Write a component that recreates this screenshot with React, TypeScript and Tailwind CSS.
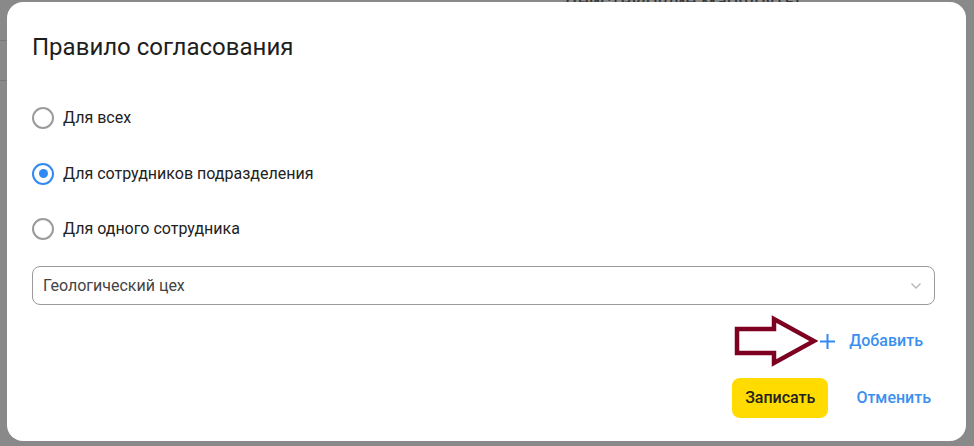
import { useState } from 'react';

const options = [
  { id: 'all', label: 'Для всех' },
  { id: 'dept', label: 'Для сотрудников подразделения' },
  { id: 'one', label: 'Для одного сотрудника' },
];

function Radio({ checked }: { checked: boolean }) {
  return (
    <span
      className={`h-[22px] w-[22px] rounded-full border-2 flex items-center justify-center shrink-0 ${
        checked ? 'border-[#2f8bf3]' : 'border-[#9b9b9b]'
      }`}
    >
      {checked && <span className="h-[9px] w-[9px] rounded-full bg-[#2f8bf3]" />}
    </span>
  );
}

function HintArrow() {
  return (
    <svg width="84" height="52" viewBox="0 0 84 52" className="shrink-0">
      <polygon
        points="3,14 40,14 40,4 80,26 40,48 40,38 3,38"
        fill="none"
        stroke="#7d0021"
        strokeWidth="4.5"
        strokeLinejoin="miter"
      />
    </svg>
  );
}

export default function App() {
  const [value, setValue] = useState('dept');

  return (
    <div className="relative w-[974px] h-[446px] bg-[#898989] overflow-hidden font-['Roboto',sans-serif]">
      {/* page behind the dialog */}
      <div className="absolute left-0 top-[40px] w-[10px] h-px bg-[#777]" />
      <div className="absolute left-0 top-[80px] w-[10px] h-px bg-[#777]" />
      <div className="absolute left-[563px] top-[-14px] text-[20px] text-[#333]">Действующие маршруты</div>

      {/* dialog */}
      <div className="absolute left-[7px] top-[2px] w-[959px] h-[439px] bg-white rounded-[16px] px-[25px] pt-[30px]">
        <h2 className="text-[24px] leading-[30px] text-[#1e1e1e] font-normal">Правило согласования</h2>

        <div className="flex flex-col gap-[33.5px] mt-[45px]">
          {options.map((o) => (
            <label
              key={o.id}
              className="flex items-center gap-[9px] h-[22px] cursor-pointer"
              onClick={() => setValue(o.id)}
            >
              <Radio checked={value === o.id} />
              <span className="text-[16px] text-[#222]">{o.label}</span>
            </label>
          ))}
        </div>

        <div className="mt-[26px] h-[39px] w-[903px] border border-[#9a9a9a] rounded-[8px] flex items-center justify-between pl-[10px] pr-[12px]">
          <span className="text-[16px] text-[#444]">Геологический цех</span>
          <svg width="12" height="8" viewBox="0 0 12 8" fill="none" stroke="#b5b5b5" strokeWidth="1.3">
            <polyline points="1.5,1.5 6,6 10.5,1.5" />
          </svg>
        </div>

        <div className="flex items-center justify-end mt-[11px] pr-[18px] h-[50px]">
          <HintArrow />
          <svg width="15" height="15" viewBox="0 0 15 15" className="ml-[2px] mr-[14px] shrink-0" stroke="#2f8bf3" strokeWidth="2">
            <line x1="7.5" y1="0" x2="7.5" y2="15" />
            <line x1="0" y1="7.5" x2="15" y2="7.5" />
          </svg>
          <span className="text-[16px] font-medium text-[#3b8ff0]">Добавить</span>
        </div>

        <div className="flex items-center justify-end mt-[12px] pr-[10px] gap-[28px]">
          <button className="h-[40px] px-[13px] rounded-[8px] bg-[#ffdb00] text-[16px] font-medium text-[#222]">
            Записать
          </button>
          <button className="text-[16px] font-medium text-[#3b8ff0]">Отменить</button>
        </div>
      </div>
    </div>
  );
}
